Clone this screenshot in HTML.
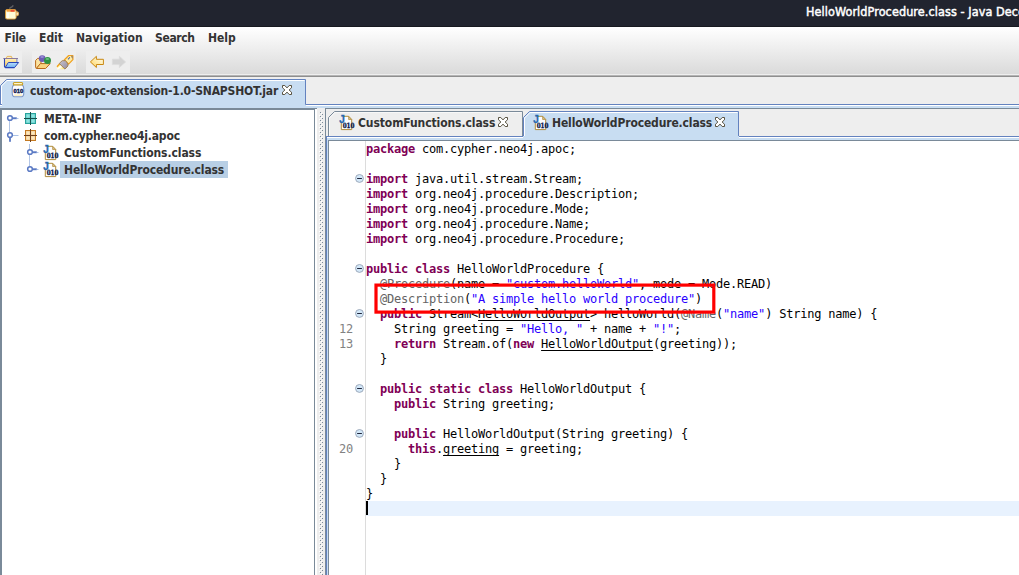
<!DOCTYPE html>
<html>
<head>
<meta charset="utf-8">
<title>HelloWorldProcedure.class - Java Decompiler</title>
<style>
html,body{margin:0;padding:0;}
body{width:1019px;height:575px;overflow:hidden;position:relative;background:#eeeeee;font-family:"DejaVu Sans Condensed","DejaVu Sans","Liberation Sans",sans-serif;font-stretch:condensed;}
.abs{position:absolute;}
svg{position:absolute;overflow:visible;}
.ui{position:absolute;font-weight:bold;font-size:12px;color:#333333;white-space:nowrap;line-height:16px;height:16px;}
#titlebar{left:0;top:0;width:1019px;height:26px;background:#21242f;}
#title{left:806px;top:4px;color:#ffffff;font-weight:normal;font-size:12.5px;letter-spacing:0.09px;-webkit-text-stroke:0.45px #ffffff;white-space:nowrap;line-height:16px;}
#menubar{left:0;top:27px;width:1019px;height:47px;background:linear-gradient(#ffffff,#dadada);}
.tbtn{position:absolute;top:51px;height:22px;background:#eeeeee;}
.mono{font-family:"DejaVu Sans Mono","Liberation Mono",monospace;font-size:12px;letter-spacing:-0.224px;line-height:15px;}
#code{left:366px;top:142px;color:#000;white-space:pre;}
#code b{color:#7f0055;font-weight:bold;}
#code i{color:#2a00ff;font-style:normal;}
#code s{color:#646464;text-decoration:none;}
#code u{text-decoration:underline;text-underline-offset:2px;text-decoration-thickness:1px;text-decoration-skip-ink:none;}
.ln{position:absolute;left:326px;width:27px;text-align:right;color:#828282;}
</style>
</head>
<body>
<!-- title bar -->
<div id="titlebar" class="abs"></div>
<div class="abs" style="left:0;top:26px;width:1019px;height:1px;background:#171920;"></div>
<div id="title" class="abs">HelloWorldProcedure.class - Java Decompiler</div>

<!-- menubar + toolbar -->
<div id="menubar" class="abs"></div>
<div class="ui" style="left:4.5px;top:30px;letter-spacing:-0.2px;">File</div>
<div class="ui" style="left:39px;top:30px;">Edit</div>
<div class="ui" style="left:76px;top:30px;letter-spacing:0.08px;">Navigation</div>
<div class="ui" style="left:155px;top:30px;letter-spacing:-0.35px;">Search</div>
<div class="ui" style="left:208px;top:30px;">Help</div>
<div class="tbtn" style="left:0;width:22px;"></div>
<div class="tbtn" style="left:32px;width:44px;"></div>
<div class="tbtn" style="left:86px;width:44px;"></div>
<div class="abs" style="left:0;top:74px;width:1019px;height:1px;background:#eeeeee;"></div>
<div class="abs" style="left:0;top:75px;width:1019px;height:1px;background:#b4b4b4;"></div>
<div class="abs" style="left:0;top:76px;width:1019px;height:1px;background:#8e8e8e;"></div>

<!-- left tabbed pane: tab -->
<svg style="left:0;top:79px;" width="1019" height="30" viewBox="0 0 1019 30">
  <polygon points="0,6.5 6.5,0 305.5,0 305.5,26 0,26" fill="#c8ddf2"/>
  <rect x="0" y="26" width="1019" height="3" fill="#c8ddf2"/>
  <polyline points="1.5,25 1.5,7 7,1.5 304.5,1.5" fill="none" stroke="#ffffff" stroke-width="1"/>
  <polyline points="0.5,25.5 0.5,6.5 6.5,0.5 305.5,0.5 305.5,25.5 1019,25.5" fill="none" stroke="#6382bf" stroke-width="1"/>
  <rect x="306" y="26" width="713" height="1" fill="#ffffff"/>
  <rect x="0" y="25" width="2" height="1" fill="#6382bf"/>
  <rect x="0" y="26" width="2" height="1" fill="#ffffff"/>
</svg>
<div class="ui" style="left:30px;top:83px;letter-spacing:-0.18px;">custom-apoc-extension-1.0-SNAPSHOT.jar</div>

<!-- tree pane -->
<div class="abs" style="left:0;top:108px;width:317px;height:1px;background:#7a8a99;"></div>
<div class="abs" style="left:0;top:109px;width:315px;height:1px;background:#7a8a99;"></div>
<div class="abs" style="left:0;top:109px;width:2px;height:470px;background:#7a8a99;"></div>
<div class="abs" style="left:2px;top:110px;width:312px;height:470px;background:#ffffff;"></div>
<div class="abs" style="left:314px;top:109px;width:1px;height:470px;background:#7a8a99;"></div>
<div class="abs" style="left:315px;top:109px;width:2px;height:470px;background:#ffffff;"></div>
<div class="abs" style="left:60px;top:161px;width:168px;height:17px;background:#b8cfe5;"></div>
<div class="ui" style="left:44px;top:111px;">META-INF</div>
<div class="ui" style="left:44px;top:128px;letter-spacing:-0.18px;">com.cypher.neo4j.apoc</div>
<div class="ui" style="left:64px;top:145px;letter-spacing:-0.09px;">CustomFunctions.class</div>
<div class="ui" style="left:64px;top:162px;letter-spacing:-0.14px;">HelloWorldProcedure.class</div>

<!-- split divider bumps -->
<svg style="left:317px;top:109px;" width="8" height="466" viewBox="317 109 8 466">
  <defs><pattern id="bump" x="319" y="112" width="4" height="4" patternUnits="userSpaceOnUse">
    <rect x="1" y="0" width="1" height="1" fill="#7a8a99"/><rect x="3" y="2" width="1" height="1" fill="#7a8a99"/>
    <rect x="0" y="3" width="1" height="1" fill="#ffffff"/><rect x="2" y="1" width="1" height="1" fill="#ffffff"/>
  </pattern></defs>
  <rect x="319" y="112" width="4" height="463" fill="url(#bump)"/>
</svg>

<!-- right pane -->
<div class="abs" style="left:325px;top:108px;width:700px;height:1px;background:#7a8a99;"></div>
<div class="abs" style="left:325px;top:108px;width:1px;height:470px;background:#7a8a99;"></div>
<svg style="left:326px;top:109px;" width="693" height="466" viewBox="0 0 693 466">
  <!-- content area -->
  <rect x="0" y="27" width="693" height="439" fill="#c8ddf2"/>
  <!-- tab 1 (unselected) -->
  <polyline points="2.5,27 2.5,8.5 8.5,2.5 196.5,2.5 196.5,27" fill="none" stroke="#7a8a99" stroke-width="1"/>
  <polyline points="3.5,27 3.5,9 9,3.5 195.5,3.5" fill="none" stroke="#ffffff" stroke-width="1" opacity="0.6"/>
  <!-- tab 2 (selected) -->
  <polygon points="197,8.5 203.5,2 412.5,2 412.5,28 197,28" fill="#c8ddf2"/>
  <polyline points="198.5,27 198.5,9 204,3.5 411.5,3.5" fill="none" stroke="#ffffff" stroke-width="1"/>
  <polyline points="197.5,27 197.5,8.5 203.5,2.5 412.5,2.5 412.5,27" fill="none" stroke="#6382bf" stroke-width="1"/>
  <!-- content border -->
  <rect x="0" y="27" width="197" height="1" fill="#6382bf"/>
  <rect x="413" y="27" width="280" height="1" fill="#6382bf"/>
  <rect x="1" y="28" width="196" height="1" fill="#ffffff"/>
  <rect x="413" y="28" width="280" height="1" fill="#ffffff"/>
  <rect x="0" y="27" width="1" height="439" fill="#6382bf"/>
  <rect x="1" y="29" width="1" height="437" fill="#c8ddf2"/>
  <!-- scroll pane -->
  <rect x="2" y="31" width="691" height="435" fill="#7a8a99"/>
  <rect x="3" y="32" width="690" height="434" fill="#ffffff"/>
</svg>
<div class="ui" style="left:358px;top:115px;letter-spacing:-0.09px;">CustomFunctions.class</div>
<div class="ui" style="left:552px;top:115px;letter-spacing:-0.14px;">HelloWorldProcedure.class</div>
<!-- java cup -->
<svg style="left:0;top:0" width="26" height="26" viewBox="0 0 26 26">
  <path d="M9.8 8.2 C10.6 7.4 12 7.2 12.9 5.8" stroke="#5e5e62" stroke-width="1.5" fill="none" stroke-linecap="round"/>
  <path d="M16 11.8 h1.1 a1.4 1.9 0 0 1 0 3.8 h-1.1" stroke="#d9a55a" stroke-width="1.2" fill="#fff3d6"/>
  <rect x="5.5" y="9.5" width="10.6" height="9.6" rx="1.6" fill="#fffbd6" stroke="#dc9a34" stroke-width="0.9"/>
  <rect x="6.6" y="9.9" width="8.6" height="1.8" fill="#f5a03c"/>
  <rect x="10.6" y="9.9" width="3.8" height="1.8" fill="#ea4a35"/>
  <rect x="7" y="12.5" width="2" height="5.5" fill="#ffffff" opacity="0.7"/>
</svg>
<!-- open file -->
<svg style="left:0;top:48px" width="24" height="28" viewBox="0 48 24 28">
  <defs>
    <linearGradient id="fy" x1="0" y1="0" x2="0" y2="1"><stop offset="0" stop-color="#fff0bd"/><stop offset="1" stop-color="#f7c64e"/></linearGradient>
    <linearGradient id="fb" x1="0" y1="0" x2="0" y2="1"><stop offset="0" stop-color="#b9defc"/><stop offset="1" stop-color="#6fb0f0"/></linearGradient>
  </defs>
  <path d="M6.2 58.4 L7.2 56.4 H11.4 L12.2 58.4 Z" fill="#fff6d8" stroke="#e3ad45" stroke-width="0.9"/>
  <path d="M4.5 58.5 H17 V62.5 H8 L5 67 Z" fill="url(#fy)"/>
  <path d="M3.3 58.5 H18" stroke="#8b7a9c" stroke-width="1" fill="none"/>
  <path d="M4.5 58.8 V66.5 L5.5 67.6 H14.5" stroke="#2a46b8" stroke-width="1.1" fill="none"/>
  <path d="M8.3 62.5 H18.6 L14.6 67.5 H5.2 Z" fill="url(#fb)" stroke="#2a46b8" stroke-width="1" stroke-linejoin="round"/>
  <path d="M16.9 58.8 V62" stroke="#6a78c8" stroke-width="0.9"/>
</svg>
<!-- open type -->
<svg style="left:32px;top:48px" width="24" height="28" viewBox="32 48 24 28">
  <path d="M35.6 60.5 L37.6 58.4 H41 V63.5 L36.3 68.3 L35.6 67.5 Z" fill="#fbe3a0" stroke="#b9691b" stroke-width="1" stroke-linejoin="round"/>
  <path d="M40.3 63.6 H50.2 L45.6 68.5 H36.4 Z" fill="#f9d581" stroke="#b9691b" stroke-width="1" stroke-linejoin="round"/>
  <circle cx="42.2" cy="58.6" r="3.4" fill="#6f5fb5"/>
  <ellipse cx="42.1" cy="57" rx="1.8" ry="1" fill="#9a8cd6"/>
  <circle cx="47.5" cy="60.6" r="3.5" fill="#2e9346"/>
  <ellipse cx="47.4" cy="59" rx="1.9" ry="1" fill="#69bf7c"/>
</svg>
<!-- search -->
<svg style="left:54px;top:48px" width="24" height="28" viewBox="54 48 24 28">
  <defs>
    <linearGradient id="lb" x1="0" y1="0" x2="1" y2="1"><stop offset="0" stop-color="#ffc420"/><stop offset="0.35" stop-color="#fff6b0"/><stop offset="0.5" stop-color="#ffffff"/><stop offset="0.75" stop-color="#fff09a"/><stop offset="1" stop-color="#ffcf38"/></linearGradient>
    <linearGradient id="lg" x1="0" y1="0" x2="1" y2="1"><stop offset="0" stop-color="#c9c4d0"/><stop offset="1" stop-color="#918a9c"/></linearGradient>
  </defs>
  <g transform="translate(0,0.4)">
  <path d="M57 66.2 L59.6 63.3 L64.6 68.6 L57 69 Z" fill="url(#lb)"/>
  <path d="M57 66.4 L59.7 63.4" stroke="#f0a020" stroke-width="1.3"/>
  <path d="M64.2 59.6 L68.7 55.1 H72.9 V59.3 L68.6 63.7 Z" fill="#fdeaa4" stroke="#f0a020" stroke-width="1.2" stroke-linejoin="round"/>
  <path d="M70.8 55.3 H72.8 V58.6 L71.6 57.2 Z" fill="#9a8468"/>
  <rect x="68.9" y="56.9" width="1.1" height="1.1" fill="#2a50b0"/><rect x="67.9" y="57.9" width="1.1" height="1.1" fill="#2a50b0"/>
  <path d="M59.3 63 L62.2 60.3 H65.6 L67.9 63.4 V65.6 L65 68.7 L64.2 68 Z" fill="url(#lg)" stroke="#a07c46" stroke-width="0.9" stroke-linejoin="round"/>
  </g>
</svg>
<!-- back -->
<svg style="left:86px;top:48px" width="44" height="28" viewBox="86 48 44 28">
  <defs><linearGradient id="ay" x1="0" y1="1" x2="1" y2="0"><stop offset="0" stop-color="#ffd25a"/><stop offset="0.45" stop-color="#ffe9a4"/><stop offset="1" stop-color="#fffdf2"/></linearGradient></defs>
  <path d="M90.4 61.9 L96.4 56.3 V59.3 H103.4 V64.5 H96.4 V67.5 Z" fill="url(#ay)" stroke="#c98812" stroke-width="1" stroke-linejoin="round"/>
  <path d="M112.4 59.2 H119.4 V56.3 L125.6 61.9 L119.4 67.5 V64.6 H112.4 Z" fill="#d3d3d3" stroke="#dcdcdc" stroke-width="0.8" stroke-linejoin="round"/>
</svg>
<!-- jar -->
<svg style="left:10px;top:80px" width="16" height="19" viewBox="10 80 16 19">
  <path d="M14 84.8 C12 86 12.2 87.8 12.2 89.5 V92.5 C12.2 94.6 12.7 96.6 14.5 96.8 H21.5 C23.3 96.6 23.8 94.6 23.8 92.5 V89.5 C23.8 87.8 24 86 22 84.8 Z" fill="#fbfcff" stroke="#7f98c6" stroke-width="1.1"/>
  <rect x="14.2" y="94.4" width="7.6" height="1.6" fill="#fdefbf"/>
  <rect x="13.4" y="82.5" width="9.2" height="2.4" rx="1" fill="#fff5cf" stroke="#c9a227" stroke-width="1.2"/>
  <text x="13.6" y="93.1" font-family="'Liberation Sans','DejaVu Sans',sans-serif" font-weight="bold" font-size="5.8" fill="#04124a" stroke="#04124a" stroke-width="0.35">010</text>
</svg>
<!-- close buttons -->
<svg style="left:282px;top:85px" width="10" height="10" viewBox="0 0 10 10">
  <path d="M0.5 0.5 H2.8 L5 2.9 L7.2 0.5 H9.5 V2.8 L7.1 5 L9.5 7.2 V9.5 H7.2 L5 7.1 L2.8 9.5 H0.5 V7.2 L2.9 5 L0.5 2.8 Z" fill="#ffffff" stroke="#585240" stroke-width="1" stroke-linejoin="miter"/>
</svg>
<svg style="left:498px;top:117px" width="10" height="10" viewBox="0 0 10 10">
  <path d="M0.5 0.5 H2.8 L5 2.9 L7.2 0.5 H9.5 V2.8 L7.1 5 L9.5 7.2 V9.5 H7.2 L5 7.1 L2.8 9.5 H0.5 V7.2 L2.9 5 L0.5 2.8 Z" fill="#ffffff" stroke="#585240" stroke-width="1" stroke-linejoin="miter"/>
</svg>
<svg style="left:715px;top:117px" width="10" height="10" viewBox="0 0 10 10">
  <path d="M0.5 0.5 H2.8 L5 2.9 L7.2 0.5 H9.5 V2.8 L7.1 5 L9.5 7.2 V9.5 H7.2 L5 7.1 L2.8 9.5 H0.5 V7.2 L2.9 5 L0.5 2.8 Z" fill="#ffffff" stroke="#585240" stroke-width="1" stroke-linejoin="miter"/>
</svg>
<!-- tree handles -->
<svg style="left:0;top:109px" width="60" height="70" viewBox="0 109 60 70">
<rect x="9" y="121" width="1" height="11" fill="#b3c6e6"/>
<rect x="29" y="144" width="1" height="22" fill="#b3c6e6"/>
<circle cx="10" cy="118" r="2.35" fill="#ffffff" stroke="#5b7ac4" stroke-width="1.5"/><rect x="12.8" y="117.3" width="4" height="1.9" fill="#5b7ac4"/><rect x="16.8" y="118" width="1.7000000000000002" height="1" fill="#a9c0e6"/>
<circle cx="10" cy="135" r="2.35" fill="#ffffff" stroke="#5b7ac4" stroke-width="1.5"/><rect x="9.1" y="138" width="1.8" height="3.8" fill="#5b7ac4"/><rect x="13" y="135" width="5.5" height="1" fill="#a9c0e6"/>
<circle cx="30" cy="152" r="2.35" fill="#ffffff" stroke="#5b7ac4" stroke-width="1.5"/><rect x="32.8" y="151.3" width="4" height="1.9" fill="#5b7ac4"/><rect x="36.8" y="152" width="1.7000000000000002" height="1" fill="#a9c0e6"/>
<circle cx="30" cy="169" r="2.35" fill="#ffffff" stroke="#5b7ac4" stroke-width="1.5"/><rect x="32.8" y="168.3" width="4" height="1.9" fill="#5b7ac4"/><rect x="36.8" y="169" width="1.7000000000000002" height="1" fill="#a9c0e6"/>
</svg>
<!-- package icons -->
<svg style="left:23px;top:111px" width="15" height="15" viewBox="-2 -2 15 15">
  <rect x="0.5" y="0.5" width="10" height="10" fill="#5fcfca" stroke="#2aa39c" stroke-width="1"/>
  <rect x="1.5" y="1.5" width="3" height="3" fill="#8fe3df"/><rect x="6.5" y="1.5" width="3" height="3" fill="#8fe3df"/>
  <rect x="1.5" y="6.5" width="3" height="3" fill="#8fe3df"/><rect x="6.5" y="6.5" width="3" height="3" fill="#8fe3df"/>
  <rect x="-1" y="5" width="13" height="1" fill="#17504c"/>
  <rect x="5" y="-1" width="1" height="13" fill="#17504c"/>
</svg>
<svg style="left:23px;top:128px" width="15" height="15" viewBox="-2 -2 15 15">
  <rect x="0.5" y="0.5" width="10" height="10" fill="#f3cf95" stroke="#c47a22" stroke-width="1"/>
  <rect x="1.5" y="1.5" width="3" height="3" fill="#fbe6bd"/><rect x="6.5" y="1.5" width="3" height="3" fill="#fbe6bd"/>
  <rect x="1.5" y="6.5" width="3" height="3" fill="#fbe6bd"/><rect x="6.5" y="6.5" width="3" height="3" fill="#fbe6bd"/>
  <rect x="-1" y="5" width="13" height="1" fill="#6e3f1c"/>
  <rect x="5" y="-1" width="1" height="13" fill="#6e3f1c"/>
</svg>
<!-- class icons -->
<svg style="left:43px;top:145px" width="17" height="16" viewBox="0 0 17 16">
  <path d="M4 1.3 H9.6 L12.7 4.5 V14.6 H2.3 V7" fill="#fbfcff" stroke="#b08c3c" stroke-width="1" stroke-linejoin="miter"/>
  <path d="M9.6 1.3 V4.5 H12.7 Z" fill="#dcc088" stroke="#b08c3c" stroke-width="0.7"/>
  <text x="0.3" y="7.6" font-family="'Liberation Sans','DejaVu Sans',sans-serif" font-weight="bold" font-size="10" fill="#2768b0" stroke="#2768b0" stroke-width="0.35">J</text>
  <text x="3.7" y="13.4" font-family="'DejaVu Serif','Liberation Serif',serif" font-weight="bold" font-size="7.2" fill="#06164a" stroke="#06164a" stroke-width="0.3" textLength="11.8" lengthAdjust="spacingAndGlyphs">010</text>
</svg>
<svg style="left:43px;top:162px" width="17" height="16" viewBox="0 0 17 16">
  <path d="M4 1.3 H9.6 L12.7 4.5 V14.6 H2.3 V7" fill="#fbfcff" stroke="#b08c3c" stroke-width="1" stroke-linejoin="miter"/>
  <path d="M9.6 1.3 V4.5 H12.7 Z" fill="#dcc088" stroke="#b08c3c" stroke-width="0.7"/>
  <text x="0.3" y="7.6" font-family="'Liberation Sans','DejaVu Sans',sans-serif" font-weight="bold" font-size="10" fill="#2768b0" stroke="#2768b0" stroke-width="0.35">J</text>
  <text x="3.7" y="13.4" font-family="'DejaVu Serif','Liberation Serif',serif" font-weight="bold" font-size="7.2" fill="#06164a" stroke="#06164a" stroke-width="0.3" textLength="11.8" lengthAdjust="spacingAndGlyphs">010</text>
</svg>
<svg style="left:339px;top:115px" width="17" height="16" viewBox="0 0 17 16">
  <path d="M4 1.3 H9.6 L12.7 4.5 V14.6 H2.3 V7" fill="#fbfcff" stroke="#b08c3c" stroke-width="1" stroke-linejoin="miter"/>
  <path d="M9.6 1.3 V4.5 H12.7 Z" fill="#dcc088" stroke="#b08c3c" stroke-width="0.7"/>
  <text x="0.3" y="7.6" font-family="'Liberation Sans','DejaVu Sans',sans-serif" font-weight="bold" font-size="10" fill="#2768b0" stroke="#2768b0" stroke-width="0.35">J</text>
  <text x="3.7" y="13.4" font-family="'DejaVu Serif','Liberation Serif',serif" font-weight="bold" font-size="7.2" fill="#06164a" stroke="#06164a" stroke-width="0.3" textLength="11.8" lengthAdjust="spacingAndGlyphs">010</text>
</svg>
<svg style="left:533px;top:115px" width="17" height="16" viewBox="0 0 17 16">
  <path d="M4 1.3 H9.6 L12.7 4.5 V14.6 H2.3 V7" fill="#fbfcff" stroke="#b08c3c" stroke-width="1" stroke-linejoin="miter"/>
  <path d="M9.6 1.3 V4.5 H12.7 Z" fill="#dcc088" stroke="#b08c3c" stroke-width="0.7"/>
  <text x="0.3" y="7.6" font-family="'Liberation Sans','DejaVu Sans',sans-serif" font-weight="bold" font-size="10" fill="#2768b0" stroke="#2768b0" stroke-width="0.35">J</text>
  <text x="3.7" y="13.4" font-family="'DejaVu Serif','Liberation Serif',serif" font-weight="bold" font-size="7.2" fill="#06164a" stroke="#06164a" stroke-width="0.3" textLength="11.8" lengthAdjust="spacingAndGlyphs">010</text>
</svg>
<!-- fold icons -->
<svg style="left:354px;top:172px" width="12" height="12" viewBox="0 0 12 12">
  <circle cx="5.5" cy="6.45" r="3.95" fill="#d3e8f9" stroke="#9ca8b8" stroke-width="0.95"/>
  <rect x="3.1" y="6" width="4.8" height="1" fill="#20253a"/>
</svg>
<svg style="left:354px;top:262px" width="12" height="12" viewBox="0 0 12 12">
  <circle cx="5.5" cy="6.45" r="3.95" fill="#d3e8f9" stroke="#9ca8b8" stroke-width="0.95"/>
  <rect x="3.1" y="6" width="4.8" height="1" fill="#20253a"/>
</svg>
<svg style="left:354px;top:307px" width="12" height="12" viewBox="0 0 12 12">
  <circle cx="5.5" cy="6.45" r="3.95" fill="#d3e8f9" stroke="#9ca8b8" stroke-width="0.95"/>
  <rect x="3.1" y="6" width="4.8" height="1" fill="#20253a"/>
</svg>
<svg style="left:354px;top:382px" width="12" height="12" viewBox="0 0 12 12">
  <circle cx="5.5" cy="6.45" r="3.95" fill="#d3e8f9" stroke="#9ca8b8" stroke-width="0.95"/>
  <rect x="3.1" y="6" width="4.8" height="1" fill="#20253a"/>
</svg>
<svg style="left:354px;top:427px" width="12" height="12" viewBox="0 0 12 12">
  <circle cx="5.5" cy="6.45" r="3.95" fill="#d3e8f9" stroke="#9ca8b8" stroke-width="0.95"/>
  <rect x="3.1" y="6" width="4.8" height="1" fill="#20253a"/>
</svg>
<!-- code area -->
<div class="abs" style="left:365px;top:141px;width:1px;height:440px;background:#dcdcdc;"></div>
<div class="abs" style="left:366px;top:501px;width:660px;height:15px;background:#e8f2fe;"></div>
<div class="abs" style="left:366px;top:501px;width:2px;height:14px;background:#000;"></div>
<div class="ln mono" style="top:322px;">12</div>
<div class="ln mono" style="top:337px;">13</div>
<div class="ln mono" style="top:442px;">20</div>
<div id="code" class="abs mono"><b>package</b> com.cypher.neo4j.apoc;

<b>import</b> java.util.stream.Stream;
<b>import</b> org.neo4j.procedure.Description;
<b>import</b> org.neo4j.procedure.Mode;
<b>import</b> org.neo4j.procedure.Name;
<b>import</b> org.neo4j.procedure.Procedure;

<b>public</b> <b>class</b> HelloWorldProcedure {
  <s>@Procedure</s>(name = <i>"custom.helloWorld"</i>, mode = Mode.READ)
  <s>@Description</s>(<i>"A simple hello world procedure"</i>)
  <b>public</b> Stream&lt;<u>HelloWorldOutput</u>&gt; helloWorld(<s>@Name</s>(<i>"name"</i>) String name) {
    String greeting = <i>"Hello, "</i> + name + <i>"!"</i>;
    <b>return</b> Stream.of(<b>new</b> <u>HelloWorldOutput</u>(greeting));
  }

  <b>public</b> <b>static</b> <b>class</b> HelloWorldOutput {
    <b>public</b> String greeting;

    <b>public</b> HelloWorldOutput(String greeting) {
      <b>this</b>.<u>greeting</u> = greeting;
    }
  }
}
</div>
<!-- red annotation rectangle -->
<svg style="left:370px;top:280px" width="350" height="38" viewBox="370 280 350 38"><rect x="376" y="285.1" width="337.8" height="27" fill="none" stroke="#ff0000" stroke-width="3.2"/></svg>

</body>
</html>
